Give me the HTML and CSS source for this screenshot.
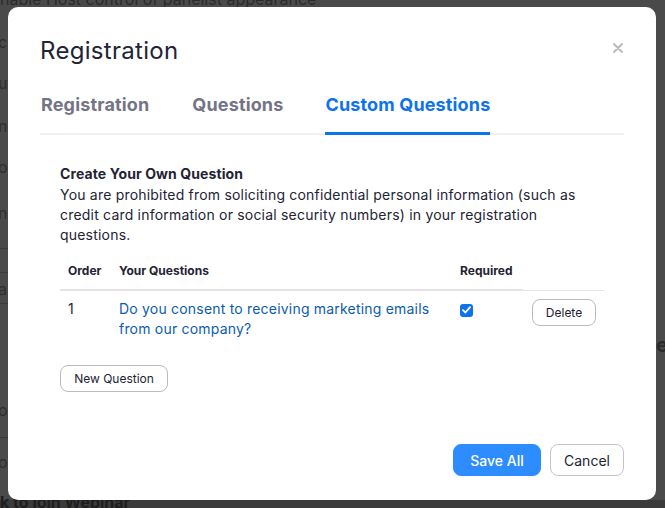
FILE: index.html
```html
<!DOCTYPE html>
<html>
<head>
<meta charset="utf-8">
<link rel="stylesheet" href="styles.css">
</head>
<body>
<div class="page">
  <div class="bg-top">nable Host control of panelist appearance</div>
  <div class="bg-frag f1">c</div>
  <div class="bg-frag f2">ut</div>
  <div class="bg-frag f3">na</div>
  <div class="bg-frag f4">op</div>
  <div class="bg-frag f5">na</div>
  <div class="bg-line l1"></div>
  <div class="bg-line l2"></div>
  <div class="bg-frag f6">as</div>
  <div class="bg-line l3"></div>
  <div class="bg-frag f7">o</div>
  <div class="bg-line l4"></div>
  <div class="bg-frag f8">oi</div>
  <div class="bg-bottom">k to join Webinar</div>
  <div class="bg-right">e</div>

  <div class="modal">
    <div class="modal-head">
      <h1 class="title">Registration</h1>
      <svg class="close" width="10" height="10" viewBox="0 0 10 10"><path d="M1 1L9 9M9 1L1 9" stroke="#b8b8b8" stroke-width="1.8" stroke-linecap="round"/></svg>
    </div>
    <div class="tabs">
      <div class="tab">Registration</div>
      <div class="tab">Questions</div>
      <div class="tab active">Custom Questions</div>
    </div>
    <div class="content">
      <div class="heading">Create Your Own Question</div>
      <p class="desc">You are prohibited from soliciting confidential personal information (such as credit card information or social security numbers) in your registration questions.</p>
      <table class="qtable">
        <thead>
          <tr>
            <th class="c-order">Order</th>
            <th class="c-q">Your Questions</th>
            <th class="c-req">Required</th>
            <th class="c-act"></th>
          </tr>
        </thead>
        <tbody>
          <tr>
            <td class="c-order">1</td>
            <td class="c-q"><span class="qlink">Do you consent to receiving marketing emails from our company?</span></td>
            <td class="c-req"><span class="check"><svg width="9" height="8" viewBox="0 0 9 8"><path d="M1 4.2L3.4 6.5L8 1.2" stroke="#fff" stroke-width="1.8" fill="none" stroke-linecap="round" stroke-linejoin="round"/></svg></span></td>
            <td class="c-act"><button class="btn btn-sm">Delete</button></td>
          </tr>
        </tbody>
      </table>
      <button class="btn btn-new">New Question</button>
    </div>
    <div class="footer">
      <button class="btn btn-primary">Save All</button>
      <button class="btn btn-cancel">Cancel</button>
    </div>
  </div>
</div>
</body>
</html>
```
FILE: styles.css
```css
* { box-sizing: border-box; }
html, body { margin: 0; padding: 0; }
body {
  font-family: Inter, "Noto Sans", "Liberation Sans", sans-serif;
  background: #3c3c3c;
  width: 665px;
  height: 508px;
  overflow: hidden;
}
.page {
  position: relative;
  width: 665px;
  height: 508px;
  background: linear-gradient(#4a4a4a 0, #4a4a4a 500px, #3b3b3b 500px);
  overflow: hidden;
}
.bg-top {
  position: absolute;
  left: 0; top: -11px;
  font-size: 16px;
  color: #2b2b2b;
}
.bg-frag {
  position: absolute;
  left: -2px;
  font-size: 16px;
  color: #2e2e2e;
}
.f1 { top: 32px; }
.f2 { top: 73px; }
.f3 { top: 116px; }
.f4 { top: 157px; }
.f5 { top: 203px; }
.f6 { top: 279px; }
.f7 { top: 400px; }
.f8 { top: 452px; }
.bg-line { position: absolute; left: 0; width: 8px; height: 1px; background: #3a3a3a; }
.l1 { top: 248px; }
.l2 { top: 272px; }
.l3 { top: 303px; }
.l4 { top: 437px; }
.bg-bottom {
  position: absolute;
  left: 0; top: 492px;
  font-size: 16px;
  font-weight: 700;
  color: #1e1e1e;
}
.bg-right {
  position: absolute;
  left: 656px; top: 333px;
  font-size: 20px;
  font-weight: 700;
  color: #2a2a2a;
}

.modal {
  position: absolute;
  left: 8px; top: 7px;
  width: 648px; height: 493px;
  background: #fff;
  border-radius: 10px;
  padding: 29px 32px 24px 32px;
  display: flex;
  flex-direction: column;
}
.modal-head {
  display: flex;
  justify-content: space-between;
  align-items: flex-start;
}
.title {
  margin: 0;
  font-size: 24px;
  line-height: 30px;
  font-weight: 400;
  color: #232333;
  letter-spacing: 0.3px;
}
.close { margin-top: 7px; margin-right: 1px; }
.tabs {
  margin-top: 27px;
  display: flex;
  gap: 42px;
  border-bottom: 2px solid #f1f1f3;
}
.tab {
  font-size: 18px;
  line-height: 24px;
  font-weight: 700;
  color: #747487;
  letter-spacing: 0.15px;
  padding: 0 0 15px 1px;
  margin-bottom: -2px;
  border-bottom: 3px solid transparent;
}
.tab.active {
  color: #0e72ed;
  border-bottom-color: #0e72ed;
  padding-left: 0;
}
.content {
  padding: 29px 20px 0 20px;
}
.heading {
  font-size: 14px;
  line-height: 20px;
  font-weight: 700;
  color: #232333;
  letter-spacing: 0.1px;
}
.desc {
  margin: 1px 0 0 0;
  font-size: 14px;
  line-height: 20px;
  color: #232333;
  letter-spacing: 0.2px;
}
.qtable {
  margin-top: 10px;
  width: 544px;
  border-collapse: collapse;
  table-layout: fixed;
}
.qtable th {
  font-size: 12px;
  line-height: 18px;
  font-weight: 700;
  color: #232333;
  text-align: left;
  padding: 7px 8px 9px 8px;
  border-bottom: 2px solid #e4e4e7;
}
.qtable th.c-act { border-bottom: 1px solid #e4e4e7; }
.c-order { width: 51px; }
.c-q { width: 341px; }
.c-req { width: 71px; }
.c-act { width: 81px; }
.qtable td {
  font-size: 14px;
  line-height: 20px;
  color: #232333;
  padding: 8px 8px 8px 8px;
  vertical-align: top;
  letter-spacing: 0.2px;
}
.qtable td.c-act { padding-left: 9px; padding-top: 8px; letter-spacing: 0; }
.qlink { color: #0b5cad; }
.check {
  display: inline-flex;
  align-items: center;
  justify-content: center;
  width: 13px; height: 13px;
  margin-top: 4px;
  background: #0e72ed;
  border-radius: 3px;
}
.btn {
  font-family: inherit;
  background: #fff;
  border: 1px solid #babac4;
  border-radius: 8px;
  color: #232333;
  cursor: pointer;
}
.btn-sm {
  width: 64px; height: 27px;
  font-size: 12px;
  padding: 0;
}
.btn-new {
  margin-top: 18px;
  width: 108px; height: 27px;
  font-size: 12px;
  padding: 0;
}
.footer {
  margin-top: auto;
  display: flex;
  justify-content: flex-end;
  gap: 9px;
}
.btn-primary {
  width: 88px; height: 32px;
  background: #2d8cff;
  border-color: #2d8cff;
  color: #fff;
  font-size: 14px;
  font-weight: 500;
}
.btn-cancel {
  width: 74px; height: 32px;
  font-size: 14px;
  border-color: #c4c4cc;
}
```
